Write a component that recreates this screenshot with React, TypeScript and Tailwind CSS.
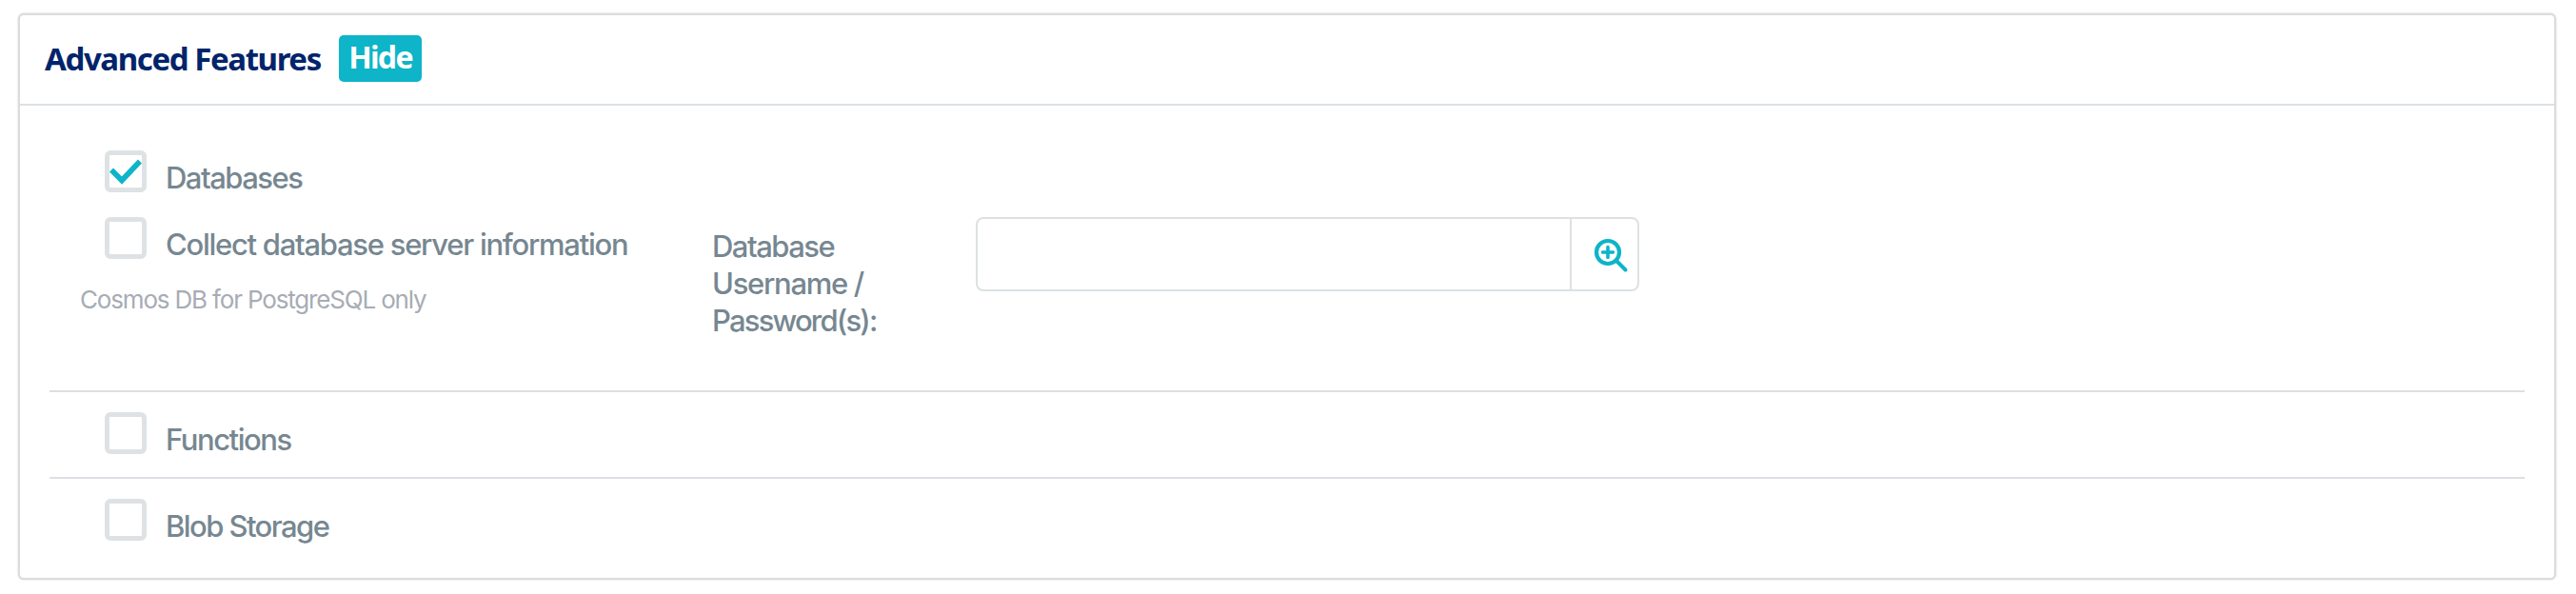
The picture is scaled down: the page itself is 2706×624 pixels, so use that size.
import React from "react";

function Checkbox({ checked = false }: { checked?: boolean }) {
  return (
    <span
      role="checkbox"
      aria-checked={checked}
      className="flex h-11 w-11 shrink-0 items-center justify-center rounded-[6px] border-[5px] border-[#dee2e5] bg-white"
    >
      {checked && (
        <svg width="34" height="34" viewBox="0 0 34 34" fill="none">
          <path d="M2 15.5 L13 26.5 L32 6.5" stroke="#0eb4c8" strokeWidth="5.8" />
        </svg>
      )}
    </span>
  );
}

function Option({ label, spacing, checked }: { label: string; spacing: string; checked?: boolean }) {
  return (
    <label className="flex h-11 items-start">
      <Checkbox checked={checked} />
      <span className={`ml-5 mt-[9px] whitespace-nowrap text-[31px] font-medium leading-[39px] ${spacing}`}>{label}</span>
    </label>
  );
}

export default function App() {
  return (
    <div className="h-[624px] bg-white pl-[21px] pt-4 font-['Inter',sans-serif] text-[#768791]">
      <section className="h-[591px] w-[2662px] rounded-[4px] bg-white shadow-[0_0_0_2px_#dcdcdc,0_0_2px_2px_rgba(0,0,0,0.22)]">
        <header className="flex h-[95px] items-start border-b-2 border-[#dce1e5] pl-[26px] pt-[21px] font-['Noto_Sans',sans-serif] font-bold">
          <h2 className="mt-[2px] w-[309px] whitespace-nowrap text-[33px] leading-[45px] tracking-[-1.4px] text-[#00246a]">
            Advanced Features
          </h2>
          <button className="h-[49px] w-[87px] whitespace-nowrap rounded-[5px] bg-[#0eb4c8] pb-[3px] text-[32px] leading-[46px] tracking-[-1.7px] text-white">
            Hide
          </button>
        </header>

        <div className="px-[31px]">
          <div className="flex h-[301px] border-b-2 border-[#dce0e4] pt-[47px]">
            <div className="w-[667px] pl-8">
              <div className="pl-[26px]">
                <Option label="Databases" spacing="tracking-[-1.5px]" checked />
                <div className="h-[26px]" />
                <Option label="Collect database server information" spacing="tracking-[-1.27px]" />
              </div>
              <p className="mt-[27px] whitespace-nowrap text-[26px] leading-8 tracking-[-1.17px] text-[#a7acb5]">
                Cosmos DB for PostgreSQL only
              </p>
            </div>
            <div className="ml-[29px] mt-[81px] flex w-[277px] flex-col text-[31px] font-medium leading-[39px]">
              <span className="tracking-[-1.5px]">Database</span>
              <span className="tracking-[-1.3px]">Username /</span>
              <span className="tracking-[-1.8px]">Password(s):</span>
            </div>
            <div className="mt-[70px] flex h-[78px] w-[697px] rounded-[8px] border-2 border-[#dde1e4]">
              <input className="w-[622px] bg-transparent px-4 outline-none" />
              <button className="flex w-[71px] border-l-2 border-[#dde1e4] pl-[20px] pt-[17px]">
                <svg width="40" height="40" viewBox="0 0 40 40" fill="none" stroke="#0eb4c8" strokeLinecap="round">
                  <circle cx="18" cy="18" r="12" strokeWidth="4.2" />
                  <path d="M18 12.5 V23.5 M12.5 18 H23.5" strokeWidth="3.6" />
                  <path d="M27 27 L36.5 36.5" strokeWidth="4" />
                </svg>
              </button>
            </div>
          </div>
          <div className="h-[91px] border-b-2 border-[#dce0e4] pl-[58px] pt-[21px]">
            <Option label="Functions" spacing="tracking-[-1.45px]" />
          </div>
          <div className="pl-[58px] pt-[21px]">
            <Option label="Blob Storage" spacing="tracking-[-1.57px]" />
          </div>
        </div>
      </section>
    </div>
  );
}
